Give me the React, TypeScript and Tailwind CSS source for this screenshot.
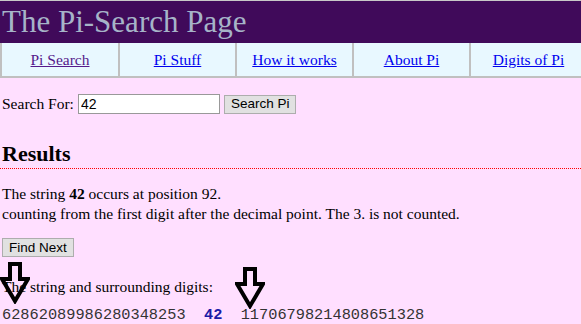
import React from 'react';

const navItems = [
  { label: 'Pi Search', visited: true },
  { label: 'Pi Stuff', visited: false },
  { label: 'How it works', visited: false },
  { label: 'About Pi', visited: false },
  { label: 'Digits of Pi', visited: false },
];

// 속이 빈 아래 화살표
const DownArrow: React.FC<{ className?: string }> = ({ className = '' }) => (
  <svg className={className} width="30" height="42" viewBox="0 0 30 42">
    <path
      d="M10 2 H20 V17 H28 L15 39 L2 17 H10 Z"
      fill="none"
      stroke="#000"
      strokeWidth="4"
      strokeLinejoin="miter"
    />
  </svg>
);

export default function App() {
  const serif = "font-['Liberation_Serif','Times_New_Roman',serif]";
  return (
    <div className={`w-[581px] h-[324px] overflow-hidden bg-[#ffdfff] ${serif} text-[15.5px] text-black relative`}>
      <div className="border-t border-[#c8c8c8] bg-[#400a5a] h-[43px] pl-[2px]">
        <h1 className="text-[31px] leading-[42px] text-[#a6b4c8]">The Pi-Search Page</h1>
      </div>

      <div className="flex w-[600px] bg-[#e8f8ff] border-2 border-[#c0c0c0] border-t-0 h-[35px]">
        {navItems.map((item, i) => (
          <div
            key={item.label}
            className={`shrink-0 flex items-center justify-center text-[15.5px] ${i > 0 ? 'w-[117px] border-l-2 border-[#c0c0c0]' : 'w-[116px]'}`}
          >
            <a className={`underline ${item.visited ? 'text-[#551a8b]' : 'text-[#0000ee]'}`}>{item.label}</a>
          </div>
        ))}
      </div>

      <div className="px-[2px]">
        <div className="flex items-center mt-[15px] h-[22px]">
          <span>Search For:</span>
          <input
            readOnly
            value="42"
            className="ml-[4px] w-[142px] h-[20px] bg-white border border-[#999] px-[2px] text-[14px] font-['Liberation_Sans',Arial,sans-serif] outline-none"
          />
          <button className="ml-[4px] h-[19px] px-[6px] bg-[#e1e1e1] border border-[#adadad] text-[13.5px] font-['Liberation_Sans',Arial,sans-serif] leading-none">
            Search Pi
          </button>
        </div>

        <h2 className="mt-[26px] text-[22px] font-bold leading-[26px] -mx-[2px] px-[2px] pb-[1px] border-b border-dotted border-[#ff0000]">
          Results
        </h2>

        <p className="mt-[15px] leading-[20px]">
          The string <b>42</b> occurs at position 92.
          <br />
          counting from the first digit after the decimal point. The 3. is not counted.
        </p>

        <button className="mt-[14px] h-[19px] px-[6px] bg-[#e1e1e1] border border-[#adadad] text-[13.5px] font-['Liberation_Sans',Arial,sans-serif] leading-none">
          Find Next
        </button>

        <p className="mt-[19px] leading-[20px]">The string and surrounding digits:</p>
        <div className="mt-[9px] font-['Liberation_Mono','Courier_New',monospace] text-[15.3px] leading-[18px] text-[#333] whitespace-pre">
          {'62862089986280348253  '}
          <b className="text-[#1a1aa6]">42</b>
          {'  11706798214808651328'}
        </div>
      </div>

      <DownArrow className="absolute left-[0px] top-[262px]" />
      <DownArrow className="absolute left-[235px] top-[267px]" />
    </div>
  );
}
